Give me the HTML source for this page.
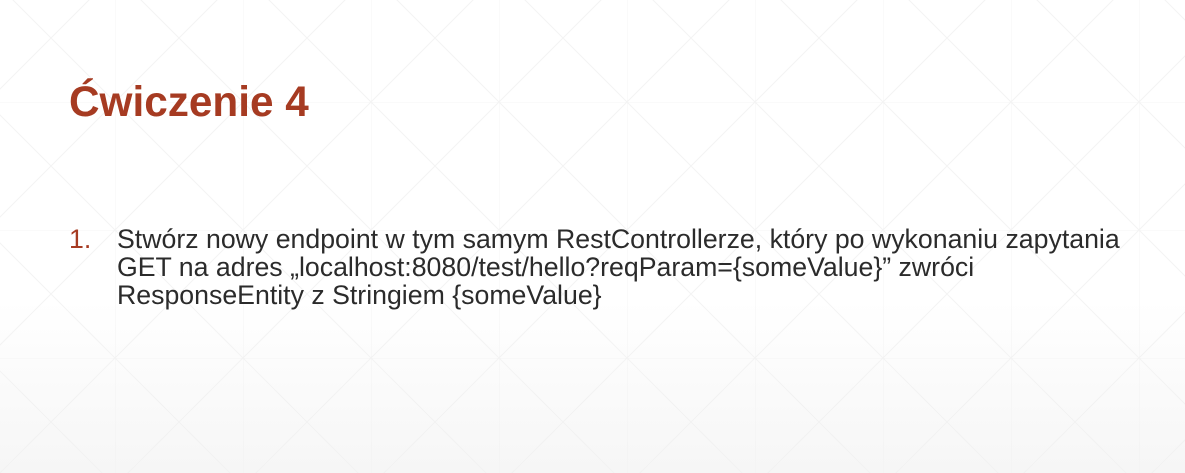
<!DOCTYPE html>
<html><head><meta charset="utf-8"><style>
body{margin:0;width:1185px;height:473px;overflow:hidden;background:linear-gradient(#fff 0,#fff 300px,#f6f6f6 473px);position:relative;font-family:"Liberation Sans",Arial,sans-serif}
svg{position:absolute;left:0;top:0}
h1{position:absolute;left:69px;top:78px;margin:0;font-size:42.3px;font-weight:bold;color:#a63b22;line-height:48px}
.n{position:absolute;left:69px;top:225px;font-size:26.7px;color:#a63b22;line-height:28px}
.t{position:absolute;left:117px;top:225px;font-size:26.7px;color:#2b2b2b;line-height:28px;width:1068px;white-space:nowrap}
</style></head><body>
<svg width="1185" height="473"><defs><pattern id="p" x="-13" y="-26" width="128" height="128" patternUnits="userSpaceOnUse"><path d="M0 0H128M0 0V128M0 0L128 128M128 0L0 128" stroke="#efefef" stroke-width="1" fill="none"/></pattern></defs><rect width="1185" height="473" fill="url(#p)" opacity=".7"/></svg>
<h1>Ćwiczenie 4</h1>
<div class="n">1.</div>
<div class="t">Stwórz nowy endpoint w tym samym RestControllerze, który po wykonaniu zapytania<br>GET na adres „localhost:8080/test/hello?reqParam={someValue}” zwróci<br>ResponseEntity z Stringiem {someValue}</div>
</body></html>
